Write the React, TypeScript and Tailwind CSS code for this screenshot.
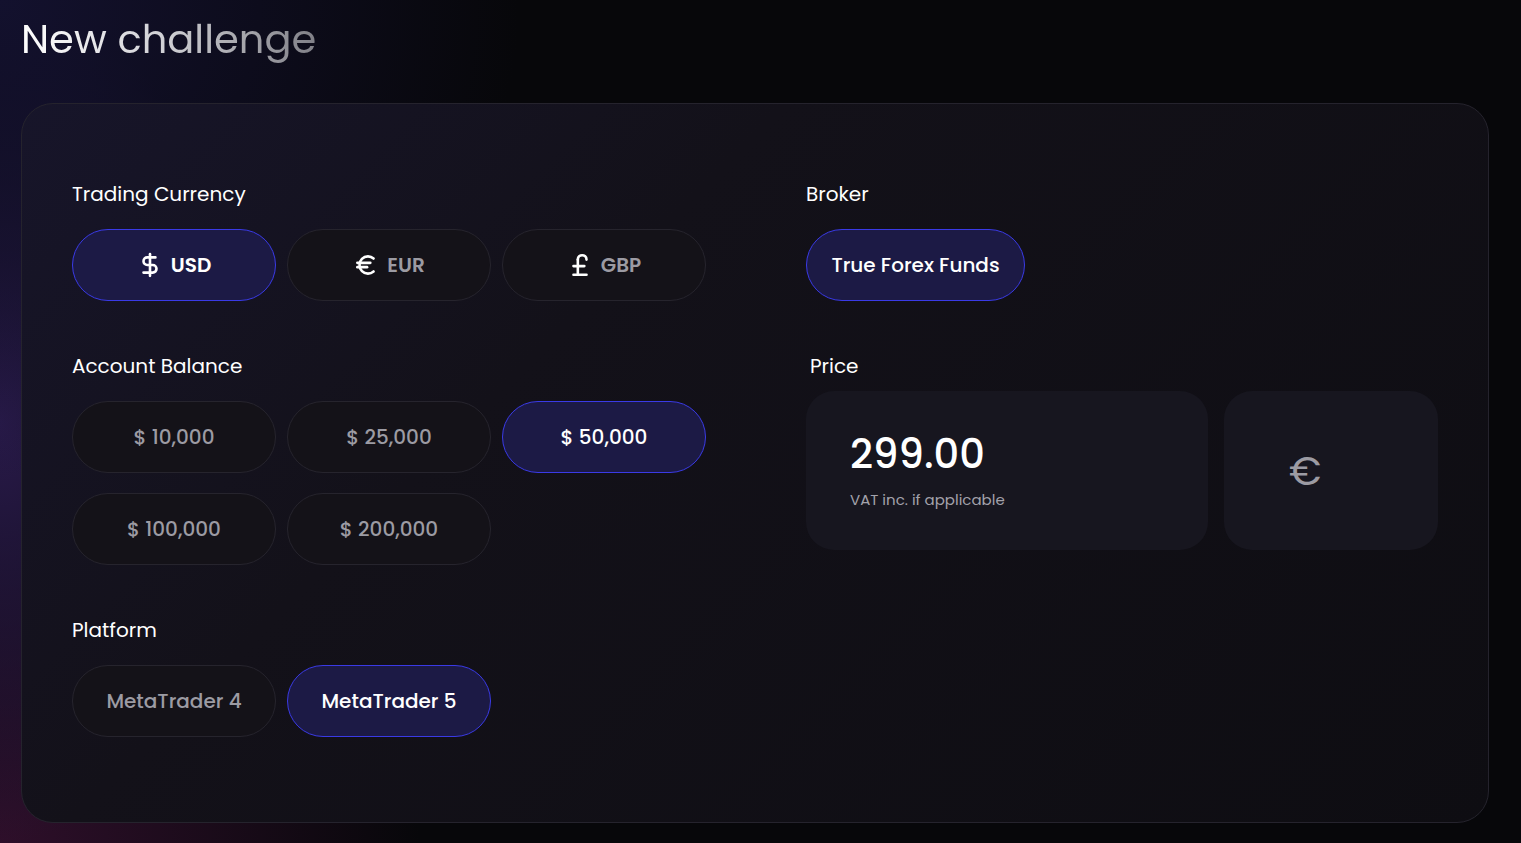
import { DollarSign, Euro, PoundSterling } from 'lucide-react'
import { twMerge } from 'tailwind-merge'

const font = { fontFamily: '"Poppins", "Open Sans", sans-serif' }

const Pill = ({
  active,
  className,
  children
}: {
  active?: boolean
  className?: string
  children: React.ReactNode
}) => (
  <button
    className={twMerge(
      'h-[72px] w-[204px] rounded-full border flex items-center justify-center gap-[8px] text-[20px] font-medium',
      active
        ? 'border-[#3a3ae6] bg-[#1c1a45] text-white'
        : 'border-[#26242d] bg-[#141218] text-[#9c9ba3]',
      className
    )}
  >
    {children}
  </button>
)

const Label = ({ children, className }: { children: React.ReactNode; className?: string }) => (
  <div className={twMerge('text-[20px] text-white leading-none', className)}>{children}</div>
)

const currencies = [
  { code: 'USD', Icon: DollarSign, active: true },
  { code: 'EUR', Icon: Euro },
  { code: 'GBP', Icon: PoundSterling }
]

export default function App() {
  return (
    <div
      style={font}
      className="min-h-[843px] w-full bg-[#07070a] bg-[radial-gradient(ellipse_520px_480px_at_0%_0%,#13112e_0%,transparent_100%),radial-gradient(ellipse_260px_420px_at_0%_50%,#291a4a_0%,transparent_100%),radial-gradient(ellipse_420px_320px_at_0%_100%,#2e0f2a_0%,transparent_100%)] px-[21px] pt-[14px] pb-[21px]"
    >
      <h1 className="text-[40px] leading-[50px] font-normal bg-gradient-to-r from-white via-[#cfcfd4] to-[#808087] bg-clip-text text-transparent w-fit">
        New challenge
      </h1>

      <div className="mt-[39px] h-[720px] w-[1468px] rounded-[32px] border border-[#25232d] bg-[linear-gradient(135deg,#17152a_0%,#131119_35%,#0e0d12_100%)] px-[50px] pt-[80px] flex">
        <div className="w-[734px] flex flex-col">
          <Label>Trading Currency</Label>
          <div className="mt-[25px] flex gap-[11px]">
            {currencies.map(({ code, Icon, active }) => (
              <Pill key={code} active={active} className="font-semibold">
                <Icon size={26} strokeWidth={2.4} className="text-white" />
                <span>{code}</span>
              </Pill>
            ))}
          </div>

          <Label className="mt-[55px]">Account Balance</Label>
          <div className="mt-[25px] grid grid-cols-[204px_204px_204px] gap-x-[11px] gap-y-[20px]">
            <Pill>$ 10,000</Pill>
            <Pill>$ 25,000</Pill>
            <Pill active>$ 50,000</Pill>
            <Pill>$ 100,000</Pill>
            <Pill>$ 200,000</Pill>
          </div>

          <Label className="mt-[55px]">Platform</Label>
          <div className="mt-[25px] flex gap-[11px]">
            <Pill>MetaTrader 4</Pill>
            <Pill active>MetaTrader 5</Pill>
          </div>
        </div>

        <div className="flex-1 flex flex-col">
          <Label>Broker</Label>
          <div className="mt-[25px] flex">
            <Pill active className="w-[219px]">
              True Forex Funds
            </Pill>
          </div>

          <Label className="mt-[55px] ml-[4px]">Price</Label>
          <div className="mt-[15px] flex gap-[16px]">
            <div className="h-[159px] w-[402px] rounded-[28px] bg-[#17161f] px-[44px] flex flex-col justify-center">
              <div className="text-[40px] leading-none font-medium text-white">299.00</div>
              <div className="mt-[18px] text-[15px] leading-none text-[#a3a2ab]">VAT inc. if applicable</div>
            </div>
            <div className="h-[159px] w-[214px] rounded-[28px] bg-[#17161f] flex items-center pl-[65px]">
              <span className="text-[40px] leading-none text-[#9c9ba3]">€</span>
            </div>
          </div>
        </div>
      </div>
    </div>
  )
}
